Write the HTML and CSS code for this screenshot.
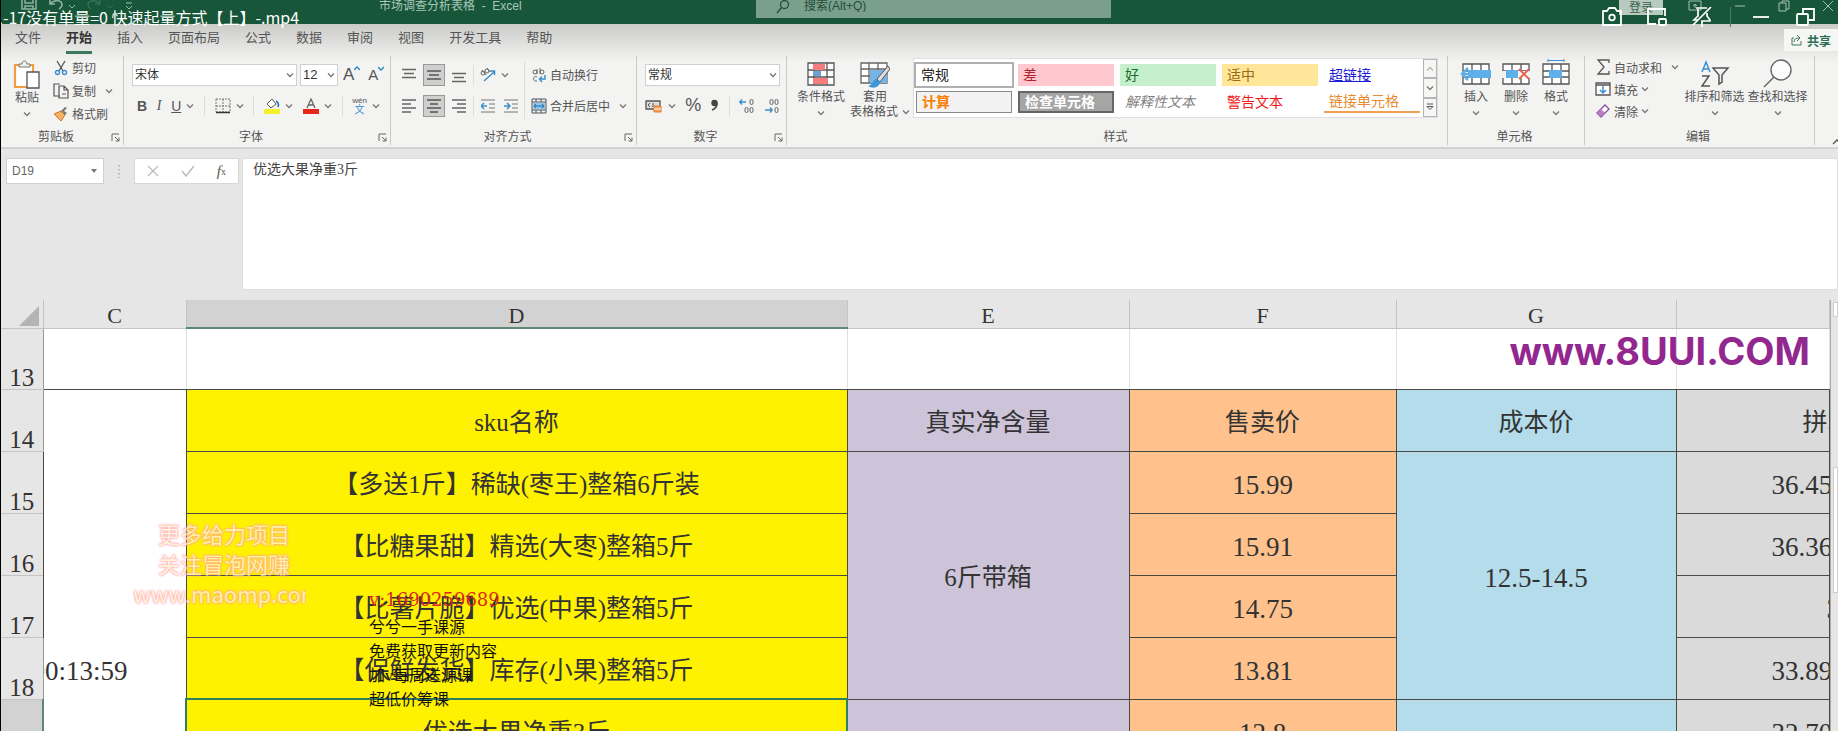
FILE: index.html
```html
<!DOCTYPE html>
<html lang="zh-CN">
<head>
<meta charset="UTF-8">
<meta name="viewport" content="width=device-width, initial-scale=1.0">
<title>市场调查分析表格 - Excel</title>
<link rel="stylesheet" href="styles.css">
</head>
<body>
<svg class="defs" aria-hidden="true">
  <symbol id="down" viewBox="0 0 8 8"><path d="M1 2.5l3 3 3-3" fill="none" stroke="#777" stroke-width="1.3"/></symbol>
  <symbol id="launch" viewBox="0 0 9 9"><path d="M1 8V1h7M4 4l4 4M8 4.500V8H4.500" fill="none" stroke="#666"/></symbol>
  <symbol id="grid" viewBox="0 0 28 24"><path d="M1 2h26v20H1zM1 9h26M1 15h26M10 2v20M19 2v20" fill="#fff" stroke="#555" stroke-width="1.3"/></symbol>
</svg>

<header class="titlebar">
  <div class="quick">
    <button aria-label="保存"><svg width="16" height="10" viewBox="0 0 16 10"><path d="M1 0v9h14V0M4 0v3h8V0M4 9V6h8v3" fill="none" stroke="#8fb3a2" stroke-width="1.500"/></svg></button>
    <button aria-label="撤消"><svg width="26" height="10" viewBox="0 0 26 10"><path d="M1 0v4h5M1 4C5-1 13 0 13 5c0 2-2 3-3 4" fill="none" stroke="#8fb3a2" stroke-width="1.600"/><path d="M20 5l3 3 3-3" fill="none" stroke="#8fb3a2"/></svg></button>
    <button aria-label="恢复"><svg width="26" height="10" viewBox="0 0 26 10"><path d="M13 0v4H8M13 4C9-1 1 0 1 5c0 2 2 3 3 4" fill="none" stroke="#31705a" stroke-width="1.500"/><path d="M20 5l3 3 3-3" fill="none" stroke="#31705a"/></svg></button>
    <button aria-label="自定义"><svg width="8" height="10" viewBox="0 0 8 10"><path d="M1 3h6M1 6l3 3 3-3" fill="none" stroke="#9dbfae"/></svg></button>
  </div>
  <div class="doc-title">市场调查分析表格 &nbsp;- &nbsp;Excel</div>
  <div class="search">
    <svg width="14" height="14" viewBox="0 0 14 14"><circle cx="8.500" cy="4.500" r="4" fill="none" stroke="#244d3b" stroke-width="1.300"/><path d="M5.500 7.500L1 13" stroke="#244d3b" stroke-width="1.400"/></svg>
    <input type="text" aria-label="搜索" placeholder="搜索(Alt+Q)">
  </div>
  <button class="login">登录</button>
  <div class="win">
    <svg width="14" height="12" viewBox="0 0 14 12"><path d="M1 1h12v9H1zM7 8V4M5 6l2-2 2 2" fill="none" stroke="#a5c2b4"/></svg>
    <svg width="12" height="12" viewBox="0 0 12 12"><path d="M1 6h10" stroke="#a5c2b4"/></svg>
    <svg width="12" height="12" viewBox="0 0 12 12"><path d="M1 3h7v8H1zM4 3V1h7v8H8" fill="none" stroke="#a5c2b4"/></svg>
    <svg width="12" height="12" viewBox="0 0 12 12"><path d="M1 1l10 10M11 1L1 11" stroke="#a5c2b4"/></svg>
  </div>
</header>

<div class="ribbon">
  <nav class="tabs">
    <a href="#">文件</a><a href="#" class="active">开始</a><a href="#">插入</a><a href="#">页面布局</a><a href="#">公式</a><a href="#">数据</a><a href="#">审阅</a><a href="#">视图</a><a href="#">开发工具</a><a href="#">帮助</a>
    <button class="share"><svg width="12" height="12" viewBox="0 0 12 12"><path d="M3 4H1v7h9V7M3 8c0-3 2-4 5-4M6 1l3 3-3 3" fill="none" stroke="#3c7a60"/></svg>共享</button>
  </nav>

  <div class="groups">
    <!-- 剪贴板 -->
    <section class="group clipboard">
      <div class="body">
        <button class="big">
          <svg width="28" height="30" viewBox="0 0 28 30"><path d="M2 5h18v22H2z" fill="#fff" stroke="#f0a040" stroke-width="2.200"/><path d="M6 7V4h3c0-4 5-4 5 0h3v3z" fill="#eee" stroke="#777"/><path d="M14 12h12v16H14z" fill="#fff" stroke="#555" stroke-width="1.300"/></svg>
          <span>粘贴</span><svg class="dn"><use href="#down"/></svg>
        </button>
        <div class="stack">
          <button><svg width="16" height="16" viewBox="0 0 16 16"><path d="M4 1l6 10M12 1L6 11" stroke="#555" stroke-width="1.300"/><circle cx="4.500" cy="12.500" r="2" fill="none" stroke="#3c8fd0" stroke-width="1.400"/><circle cx="11.500" cy="12.500" r="2" fill="none" stroke="#3c8fd0" stroke-width="1.400"/></svg>剪切</button>
          <button><svg width="16" height="16" viewBox="0 0 16 16"><path d="M7 13H1V1h6M6 3h5l4 4v8H6zM11 3v4h4M9 11h4" fill="none" stroke="#555" stroke-width="1.200"/></svg>复制<svg class="dn gap"><use href="#down"/></svg></button>
          <button><svg width="16" height="16" viewBox="0 0 16 16"><path d="M1 8l7-3 4 4-4 6z" fill="#f3b266" stroke="#c9782c"/><path d="M8 4l4 5 2-2-3-2 3-3-2-1-3 3z" fill="#777"/></svg>格式刷</button>
        </div>
      </div>
      <footer><span>剪贴板</span><svg><use href="#launch"/></svg></footer>
    </section>

    <!-- 字体 -->
    <section class="group font">
      <div class="body col">
        <div class="line">
          <div class="combo face"><select aria-label="字体"><option>宋体</option></select><svg class="dn"><use href="#down"/></svg></div>
          <div class="combo size"><select aria-label="字号"><option>12</option></select><svg class="dn"><use href="#down"/></svg></div>
          <button aria-label="增大字号" class="grow">A<svg width="6" height="5" viewBox="0 0 6 5"><path d="M0 4l3-3 3 3" fill="none" stroke="#2f87b8" stroke-width="1.300"/></svg></button>
          <button aria-label="减小字号" class="grow small">A<svg width="6" height="5" viewBox="0 0 6 5"><path d="M0 1l3 3 3-3" fill="none" stroke="#2f87b8" stroke-width="1.300"/></svg></button>
        </div>
        <div class="line marks">
          <button class="b">B</button><button class="i">I</button><button class="u">U<svg class="dn"><use href="#down"/></svg></button>
          <i class="bar"></i>
          <button aria-label="边框"><svg width="16" height="16" viewBox="0 0 16 16"><path d="M1 1h14v13H1M8 1v13M1 8h14M1 1v13" fill="none" stroke="#777" stroke-dasharray="2 1"/><path d="M1 14.500h14" stroke="#333" stroke-width="1.500"/></svg><svg class="dn"><use href="#down"/></svg></button>
          <i class="bar"></i>
          <button aria-label="填充颜色"><svg width="16" height="16" viewBox="0 0 16 16"><path d="M3 6l5-5 4 5-5 4z" fill="#fff" stroke="#555"/><path d="M12 3c2 1 3 3 2 6" fill="none" stroke="#2f6fa8" stroke-width="1.600"/><path d="M0 11h16v5H0z" fill="#f5f02a"/></svg><svg class="dn"><use href="#down"/></svg></button>
          <button aria-label="字体颜色"><svg width="16" height="16" viewBox="0 0 16 16"><path d="M4 10l4-9 4 9M5.500 7h5" fill="none" stroke="#666" stroke-width="1.300"/><path d="M0 11h16v5H0z" fill="#e8251a"/></svg><svg class="dn"><use href="#down"/></svg></button>
          <i class="bar"></i>
          <button aria-label="拼音"><span class="pinyin"><b>wén</b><em>文</em></span><svg class="dn"><use href="#down"/></svg></button>
        </div>
      </div>
      <footer><span>字体</span><svg><use href="#launch"/></svg></footer>
    </section>

    <!-- 对齐方式 -->
    <section class="group align">
      <div class="body">
        <div class="pad">
          <div class="line">
            <button aria-label="顶端对齐"><svg width="14" height="16" viewBox="0 0 14 16"><path d="M0 2.500h14M2 6.500h10M0 10.500h14" stroke="#666" stroke-width="1.300"/></svg></button>
            <button aria-label="垂直居中" class="on"><svg width="14" height="16" viewBox="0 0 14 16"><path d="M0 4h14M2 8h10M0 12h14" stroke="#555" stroke-width="1.300"/></svg></button>
            <button aria-label="底端对齐"><svg width="14" height="16" viewBox="0 0 14 16"><path d="M0 6.500h14M2 10.500h10M0 14.500h14" stroke="#666" stroke-width="1.300"/></svg></button>
            <i class="bar"></i>
            <button aria-label="方向" class="dir"><svg width="18" height="16" viewBox="0 0 18 16"><path d="M5 14L15 5M11 4h4.500v4" fill="none" stroke="#3c8fd0" stroke-width="1.500"/><circle cx="4" cy="6" r="2" fill="none" stroke="#666"/><path d="M3 3l4 5M8 1l3 4" stroke="#666"/><circle cx="8" cy="4" r="2" fill="none" stroke="#666"/></svg><svg class="dn"><use href="#down"/></svg></button>
          </div>
          <div class="line">
            <button aria-label="左对齐"><svg width="14" height="16" viewBox="0 0 14 16"><path d="M0 2h14M0 6h9M0 10h14M0 14h9" stroke="#666" stroke-width="1.300"/></svg></button>
            <button aria-label="居中" class="on"><svg width="14" height="16" viewBox="0 0 14 16"><path d="M0 2h14M3 6h8M0 10h14M3 14h8" stroke="#555" stroke-width="1.300"/></svg></button>
            <button aria-label="右对齐"><svg width="14" height="16" viewBox="0 0 14 16"><path d="M0 2h14M5 6h9M0 10h14M5 14h9" stroke="#666" stroke-width="1.300"/></svg></button>
            <i class="bar"></i>
            <button aria-label="减少缩进"><svg width="14" height="16" viewBox="0 0 14 16"><path d="M0 2h14M8 6h6M8 10h6M0 14h14" stroke="#777"/><path d="M6 8H1M3 5L0 8l3 3" fill="none" stroke="#3c8fd0" stroke-width="1.500"/></svg></button>
            <button aria-label="增加缩进"><svg width="14" height="16" viewBox="0 0 14 16"><path d="M0 2h14M8 6h6M8 10h6M0 14h14" stroke="#777"/><path d="M0 8h5M3 5l3 3-3 3" fill="none" stroke="#3c8fd0" stroke-width="1.500"/></svg></button>
          </div>
        </div>
        <i class="bar tall"></i>
        <div class="pad merge">
          <button class="line"><svg width="16" height="16" viewBox="0 0 16 16"><circle cx="4" cy="5" r="2" fill="none" stroke="#666"/><path d="M6 2v5M9 1v6" stroke="#666"/><circle cx="11" cy="5" r="2" fill="none" stroke="#666"/><path d="M6 10c-4-2-5 5 0 4" fill="none" stroke="#666"/><path d="M14 8v4H9M11 9.500L8.500 12l2.500 3" fill="none" stroke="#3c8fd0" stroke-width="1.500"/></svg>自动换行</button>
          <button class="line"><svg width="16" height="16" viewBox="0 0 16 16"><path d="M1 1h14v14H1zM1 4h14M1 12h14M5 1v3M10 1v3M5 12v3M10 12v3" fill="#e8f3fb" stroke="#555"/><path d="M2 5h12v6H2z" fill="#8cc4ec"/><path d="M3 8h10M5 6L3 8l2 2M11 6l2 2-2 2" fill="none" stroke="#1f6fae"/></svg>合并后居中<svg class="dn gap"><use href="#down"/></svg></button>
        </div>
      </div>
      <footer><span>对齐方式</span><svg><use href="#launch"/></svg></footer>
    </section>

    <!-- 数字 -->
    <section class="group number">
      <div class="body col">
        <div class="line">
          <div class="combo fmt"><select aria-label="数字格式"><option>常规</option></select><svg class="dn"><use href="#down"/></svg></div>
        </div>
        <div class="line">
          <button aria-label="会计数字格式" class="money"><svg width="17" height="16" viewBox="0 0 17 16"><path d="M1 3h14v8H1z" fill="#ddd" stroke="#555" stroke-width="1.300"/><path d="M5 5l-2 2 2 2M8 5v4" fill="none" stroke="#555"/><path d="M9 8h7v6H9z" fill="#f6a05a" stroke="#e07a28"/><path d="M9 11h7" stroke="#fff"/></svg><svg class="dn"><use href="#down"/></svg></button>
          <button class="pct">%</button>
          <button aria-label="千位分隔"><svg width="9" height="14" viewBox="0 0 9 14"><circle cx="4.500" cy="4" r="3.200" fill="#444"/><path d="M7 4c0 4-2 6-5 7" fill="none" stroke="#444" stroke-width="1.600"/></svg></button>
          <i class="bar"></i>
          <button aria-label="增加小数"><svg width="16" height="16" viewBox="0 0 16 16"><path d="M7 4H1M3 1.500L.800 4 3 6.500" fill="none" stroke="#3c8fd0" stroke-width="1.400"/><g fill="none" stroke="#666"><rect x="11" y="1.500" width="3" height="5" rx="1.500"/><rect x="6" y="9.500" width="3" height="5" rx="1.500"/><rect x="11" y="9.500" width="3" height="5" rx="1.500"/></g></svg></button>
          <button aria-label="减少小数"><svg width="16" height="16" viewBox="0 0 16 16"><path d="M1 12h7M6 9.500L8.200 12 6 14.500" fill="none" stroke="#3c8fd0" stroke-width="1.400"/><g fill="none" stroke="#666"><rect x="6" y="1.500" width="3" height="5" rx="1.500"/><rect x="11" y="1.500" width="3" height="5" rx="1.500"/><rect x="11" y="9.500" width="3" height="5" rx="1.500"/></g></svg></button>
        </div>
      </div>
      <footer><span>数字</span><svg><use href="#launch"/></svg></footer>
    </section>

    <!-- 样式 -->
    <section class="group style">
      <div class="body">
        <button class="big">
          <svg width="28" height="30" viewBox="0 0 28 30"><path d="M1 4h26v22H1zM1 11h26M1 18h26M7 4v22M20 4v22" fill="#fff" stroke="#555" stroke-width="1.300"/><path d="M6 5h12v6H6zM6 19h15v6H6z" fill="#f47c7c"/><path d="M6 12h8v5H6z" fill="#6f9fd0"/></svg>
          <span>条件格式</span><svg class="dn"><use href="#down"/></svg>
        </button>
        <button class="big">
          <svg width="30" height="30" viewBox="0 0 30 30"><path d="M1 4h26v20H1zM1 10h26M1 17h26M9 4v20M18 4v20" fill="#fff" stroke="#666" stroke-width="1.300"/><path d="M10 11h17v13H10z" fill="#74b4e6"/><path d="M28 7L17 20l3 3L30 10z" fill="#ddd" stroke="#555"/><path d="M17 20c-4 0-4 6-9 7 5 3 11 2 12-4z" fill="#3a96d8"/></svg>
          <span>套用</span><span class="two">表格格式<svg class="dn"><use href="#down"/></svg></span>
        </button>
        <div class="gallery">
          <div class="cells">
            <button class="normal">常规</button><button class="bad">差</button><button class="good">好</button><button class="neutral">适中</button><button class="hyper">超链接</button>
            <button class="calc">计算</button><button class="check">检查单元格</button><button class="explain">解释性文本</button><button class="warn">警告文本</button><button class="linked">链接单元格</button>
          </div>
          <div class="scroller">
            <button aria-label="上一行"><svg class="dn up"><use href="#down"/></svg></button>
            <button aria-label="下一行"><svg class="dn"><use href="#down"/></svg></button>
            <button aria-label="其他"><svg width="8" height="8" viewBox="0 0 8 8"><path d="M1 1h6M1 3.500h6L4 6.500z" fill="none" stroke="#555"/></svg></button>
          </div>
        </div>
      </div>
      <footer><span>样式</span></footer>
    </section>

    <!-- 单元格 -->
    <section class="group cellgrp">
      <div class="body">
        <button class="big"><svg width="32" height="30" viewBox="0 0 32 30"><use href="#grid" x="2" y="3" width="28" height="24"/><path d="M8 11h23v8H8z" fill="#5fb0ea"/><path d="M16 15H2M8 9l-6 6 6 6" fill="none" stroke="#5fb0ea" stroke-width="2.500"/></svg><span>插入</span><svg class="dn"><use href="#down"/></svg></button>
        <button class="big"><svg width="30" height="30" viewBox="0 0 30 30"><use href="#grid" x="1" y="3" width="28" height="24"/><path d="M0 12h30v7H0z" fill="#f3f3f2"/><path d="M5 11h12v8H5z" fill="#5fb0ea"/><path d="M18 10l10 10M28 10L18 20" stroke="#e8604c" stroke-width="1.800"/></svg><span>删除</span><svg class="dn"><use href="#down"/></svg></button>
        <button class="big"><svg width="30" height="30" viewBox="0 0 30 30"><use href="#grid" x="1" y="3" width="28" height="24"/><path d="M8 11h13v8H8z" fill="#5fb0ea"/><path d="M7 1.500h16M7 0v3M23 0v3" stroke="#3c8fd0"/></svg><span>格式</span><svg class="dn"><use href="#down"/></svg></button>
      </div>
      <footer><span>单元格</span></footer>
    </section>

    <!-- 编辑 -->
    <section class="group edit">
      <div class="body">
        <div class="stack">
          <button><svg width="16" height="16" viewBox="0 0 16 16"><path d="M14 4V1H3l6 7-6 7h11v-3" fill="none" stroke="#555" stroke-width="1.300"/></svg>自动求和<svg class="dn gap"><use href="#down"/></svg></button>
          <button><svg width="16" height="16" viewBox="0 0 16 16"><path d="M1 2h14v12H1zM1 4h14" fill="#fff" stroke="#555" stroke-width="1.300"/><path d="M8 5v7M5 9l3 3 3-3" fill="none" stroke="#3c8fd0" stroke-width="1.500"/></svg>填充<svg class="dn"><use href="#down"/></svg></button>
          <button><svg width="16" height="16" viewBox="0 0 16 16"><path d="M2 10l8-8 4 4-8 8z" fill="#fff" stroke="#8a4f9e" stroke-width="1.300"/><path d="M2 10l4-4 4 4-4 4z" fill="#b87cc8"/></svg>清除<svg class="dn"><use href="#down"/></svg></button>
        </div>
        <button class="big"><svg width="30" height="30" viewBox="0 0 30 30"><path d="M2 13L6 3l4 10M3.500 10h5" fill="none" stroke="#3c8fd0" stroke-width="1.500"/><path d="M2 17h7L2 27h8M13 9h15l-6 7v7l-3 2v-9z" fill="none" stroke="#555" stroke-width="1.500"/></svg><span>排序和筛选</span><svg class="dn"><use href="#down"/></svg></button>
        <button class="big"><svg width="30" height="30" viewBox="0 0 30 30"><circle cx="18" cy="11" r="10" fill="#fcfcfc" stroke="#666" stroke-width="1.400"/><path d="M11 18L1 28" stroke="#666" stroke-width="1.500"/></svg><span>查找和选择</span><svg class="dn"><use href="#down"/></svg></button>
      </div>
      <footer><span>编辑</span></footer>
    </section>
    <button class="fold" aria-label="折叠功能区"><svg width="6" height="8" viewBox="0 0 6 8"><path d="M1 6l4-4 4 4" fill="none" stroke="#555" stroke-width="1.300"/></svg></button>
  </div>
</div>

<div class="formula">
  <div class="namebox combo"><select aria-label="名称框"><option>D19</option></select><svg width="8" height="6" viewBox="0 0 8 6"><path d="M1 1h6L4 5z" fill="#777"/></svg></div>
  <svg class="dots" width="4" height="14" viewBox="0 0 4 14"><path d="M2 1v13" stroke="#aaa" stroke-width="1.500" stroke-dasharray="1.500 2.500"/></svg>
  <div class="fx">
    <svg width="12" height="12" viewBox="0 0 12 12"><path d="M1 1l10 10M11 1L1 11" stroke="#bbb" stroke-width="1.300"/></svg>
    <svg width="14" height="12" viewBox="0 0 14 12"><path d="M1 6l4 5 8-10" fill="none" stroke="#bbb" stroke-width="1.400"/></svg>
    <button><i>f</i><small>x</small></button>
  </div>
  <textarea aria-label="编辑栏">优选大果净重3斤</textarea>
</div>

<main class="sheet">
  <div class="view">
    <table>
      <colgroup><col class="c-row"><col class="c-c"><col class="c-d"><col class="c-e"><col class="c-f"><col class="c-g"><col></colgroup>
      <thead>
        <tr><th class="corner"><svg width="20" height="20" viewBox="0 0 20 20"><path d="M20 0v20H0z" fill="#b4b4b4"/></svg></th><th>C</th><th class="sel">D</th><th>E</th><th>F</th><th>G</th><th></th></tr>
      </thead>
      <tbody>
        <tr class="blank"><th>13</th><td></td><td></td><td></td><td></td><td></td><td></td></tr>
        <tr><th>14</th><td class="plain" rowspan="4"></td><td class="yellow">sku名称</td><td class="purple">真实净含量</td><td class="orange">售卖价</td><td class="blue">成本价</td><td class="gray head">拼单价</td></tr>
        <tr><th>15</th><td class="yellow">【多送1斤】稀缺(枣王)整箱6斤装</td><td class="purple" rowspan="4">6斤带箱</td><td class="orange num">15.99</td><td class="blue num" rowspan="4">12.5-14.5</td><td class="gray num">36.45</td></tr>
        <tr><th>16</th><td class="yellow">【比糖果甜】精选(大枣)整箱5斤</td><td class="orange num">15.91</td><td class="gray num">36.36</td></tr>
        <tr><th>17</th><td class="yellow">【比薯片脆】优选(中果)整箱5斤</td><td class="orange num">14.75</td><td class="gray num edge">35</td></tr>
        <tr><th>18</th><td class="plain time num"><div>00:13:59</div></td><td class="yellow">【保鲜发货】库存(小果)整箱5斤</td><td class="orange num">13.81</td><td class="gray num">33.89</td></tr>
        <tr><th class="sel"></th><td class="plain"></td><td class="yellow current">优选大果净重3斤</td><td class="purple"></td><td class="orange num">12.8</td><td class="blue"></td><td class="gray num">32.70</td></tr>
      </tbody>
    </table>
  </div>
  <div class="vscroll"><i class="knob"></i><i class="thumb"></i></div>
</main>

<!-- 播放器浮层 -->
<div class="video-name">1-17没有单量=0 快速起量方式【上】-.mp4</div>
<div class="player">
  <button aria-label="截图"><svg width="22" height="20" viewBox="0 0 22 20"><path d="M2 4h4l2-3h6l2 3h4v14H2z" fill="none" stroke="#fff" stroke-width="1.800" stroke-linejoin="round"/><circle cx="11" cy="10.500" r="2.800" fill="none" stroke="#fff" stroke-width="1.800"/></svg></button>
  <button aria-label="小窗"><svg width="22" height="20" viewBox="0 0 22 20"><path d="M10 17H2V2h17v7" fill="none" stroke="#fff" stroke-width="1.800"/><rect x="13" y="12" width="7" height="6" rx="1" fill="none" stroke="#fff" stroke-width="1.800"/></svg></button>
  <button aria-label="置顶"><svg width="22" height="20" viewBox="0 0 22 20"><path d="M2 18L20 0M5 1h11M7 2v7l-4 4h4M16 6v3l3 4v1h-8v6" fill="none" stroke="#fff" stroke-width="1.700"/></svg></button>
  <i class="split"></i>
  <button aria-label="最小化"><svg width="22" height="20" viewBox="0 0 22 20"><path d="M3 10h16" stroke="#fff" stroke-width="1.800"/></svg></button>
  <button aria-label="还原"><svg width="22" height="20" viewBox="0 0 22 20"><rect x="2" y="7" width="11" height="11" rx="1" fill="none" stroke="#fff" stroke-width="1.800"/><path d="M8 6V2h11v11h-5" fill="none" stroke="#fff" stroke-width="1.800"/></svg></button>
</div>
<div class="mark-site">www.8UUI.COM</div>
<div class="mark-pink"><p>更多给力项目</p><p>关注冒泡网赚</p><p class="url">www.maomp.com</p></div>
<div class="mark-course"><p class="red">v:1690259689</p><p>兮兮一手课源</p><p>免费获取更新内容</p><p>加v每周送源课</p><p>超低价筹课</p></div>
</body>
</html>
```
FILE: styles.css
```css
* {
  box-sizing: border-box;
}

body {
  margin: 0;
  height: 100vh;
  display: flex;
  flex-direction: column;
  position: relative;
  overflow: hidden;
  border-left: 1px solid #000;
  background: #e6e6e6;
  color: #555;
  font-family: "Liberation Sans", "Noto Sans CJK SC", sans-serif;
  font-size: 12px;
}

button {
  display: flex;
  align-items: center;
  padding: 0;
  border: 0;
  background: none;
  color: inherit;
  font: inherit;
  white-space: nowrap;
}

svg {
  flex: none;
}

p {
  margin: 0;
}

.defs {
  display: none;
}

.dn {
  width: 8px;
  height: 8px;
}

/* title bar */
.titlebar {
  display: flex;
  align-items: flex-start;
  flex: none;
  height: 24px;
  background: #18563a;
  overflow: hidden;
}

.quick {
  display: flex;
  gap: 12px;
  width: 378px;
  padding-left: 20px;
}

.doc-title {
  width: 377px;
  line-height: 12px;
  color: #a9c7b8;
  white-space: pre;
}

.search {
  display: flex;
  gap: 14px;
  width: 355px;
  height: 18px;
  padding-left: 20px;
  background: #7a9f8d;
}

.search input {
  height: 12px;
  padding: 0;
  border: 0;
  background: none;
  font: inherit;
}

.search input::placeholder {
  color: #244d3b;
}

.login {
  height: 15px;
  margin-left: auto;
  padding: 0 10px 2px;
  background: #b9cbc1;
  color: #39614e;
}

.win {
  display: flex;
  gap: 32px;
  padding: 0 4px 0 25px;
}

/* ribbon */
.ribbon {
  flex: none;
  border-bottom: 2px solid #d2d2d1;
  background: linear-gradient(#cbcbca, #f3f3f2 38px);
}

.tabs {
  display: flex;
  align-items: center;
  gap: 25px;
  height: 32px;
  padding-left: 14px;
  font-size: 13px;
}

.tabs a {
  height: 28px;
  line-height: 24px;
  color: #555;
  text-decoration: none;
}

.tabs .active {
  border-bottom: 3px solid #3c7a60;
  color: #333;
  font-weight: bold;
}

.share {
  gap: 4px;
  height: 22px;
  margin-left: auto;
  padding: 0 7px;
  background: #f6f6f5;
  color: #2c6e52;
  font-weight: bold;
  font-size: 12px;
}

.groups {
  display: flex;
  height: 91px;
}

.group {
  display: flex;
  flex-direction: column;
  flex: none;
  margin-bottom: 2px;
  border-right: 1px solid #c9c9c8;
}

.clipboard { width: 123px; }
.font { width: 267px; }
.align { width: 246px; }
.number { width: 150px; }
.style { flex: 1; }
.cellgrp { width: 137px; }
.edit { width: 230px; }

.body {
  display: flex;
  flex: 1;
}

.group footer {
  display: flex;
  align-items: center;
  height: 16px;
  padding-right: 3px;
  line-height: 16px;
}

.group footer span {
  flex: 1;
  text-align: center;
}

.group footer svg {
  width: 9px;
  height: 9px;
}

.big {
  flex-direction: column;
  justify-content: flex-start;
  padding-top: 3px;
  line-height: 16px;
}

.big .dn {
  margin-top: 4px;
}

.big .two {
  line-height: 14px;
  margin-right: -10px;
}

.big .two .dn {
  margin: 0 0 0 4px;
}

.clipboard .big {
  width: 52px;
  padding-top: 4px;
}

.stack {
  display: flex;
  flex-direction: column;
}

.stack button {
  gap: 3px;
  height: 23px;
}

.dn.gap {
  margin-left: 6px;
}

.col,
.pad {
  padding-top: 7px;
}

.col {
  flex-direction: column;
}

.line {
  display: flex;
  align-items: center;
  height: 23px;
  margin-bottom: 8px;
}

.combo {
  display: grid;
  align-items: center;
  height: 22px;
  border: 1px solid #d0d0d0;
  background: #fff;
}

.combo select {
  grid-area: 1 / 1;
  width: 100%;
  height: 20px;
  padding: 0 2px;
  border: 0;
  appearance: none;
  background: none;
  color: #333;
  font: inherit;
}

.combo svg {
  grid-area: 1 / 1;
  justify-self: end;
  margin-right: 2px;
  pointer-events: none;
}

.font .body {
  padding-left: 8px;
}

.face { width: 165px; margin-right: 3px; }
.size { width: 38px; margin-right: 5px; font-size: 13px; }
.fmt { width: 135px; }

.grow {
  align-items: flex-start;
  margin-right: 8px;
  font-size: 17px;
  line-height: 18px;
}

.grow.small {
  margin-right: 0;
  font-size: 15px;
}

.bar {
  width: 1px;
  height: 20px;
  background: #dcdcdb;
}

.marks {
  justify-content: space-between;
  padding: 0 10px 0 5px;
  font-size: 14px;
}

.marks button {
  gap: 5px;
}

.b { font-weight: bold; }
.i { font-family: "Liberation Serif", serif; font-style: italic; }
.u { text-decoration: underline; }

.pinyin {
  display: flex;
  flex-direction: column;
  align-items: center;
  line-height: 8px;
}

.pinyin b { font-size: 8px; font-weight: normal; }
.pinyin em { color: #3c8fd0; font-size: 10px; font-style: normal; line-height: 10px; }

.align .line {
  gap: 5px;
}

.align .pad {
  width: 133px;
  padding-left: 9px;
}

.align .pad button {
  justify-content: center;
  width: 18px;
  height: 22px;
}

.align .pad .on {
  width: 22px;
  border: 1px solid #999;
  background: #cfcfce;
}

.align .pad .dir {
  justify-content: flex-start;
  gap: 4px;
  width: 40px;
}

.bar.tall {
  height: 58px;
  margin-top: 5px;
}

.align .merge {
  width: auto;
  padding-left: 6px;
}

.align .merge button {
  justify-content: flex-start;
  width: auto;
  height: 23px;
  gap: 3px;
}

.number .body {
  padding-left: 8px;
}

.number .line {
  justify-content: space-between;
  padding-right: 6px;
}

.money {
  gap: 6px;
}

.pct {
  font-size: 18px;
}

/* cell style gallery */
.style .body {
  padding-left: 10px;
  gap: 6px;
}

.style .big {
  width: 48px;
}

.style .gallery {
  display: flex;
  flex: 1;
  height: 60px;
  margin: 2px 9px 0 8px;
  border: 1px solid #dedede;
  background: #fff;
}

.cells {
  display: grid;
  flex: 1;
  grid-template-columns: repeat(5, 1fr);
  grid-auto-rows: 22px;
  gap: 5px 6px;
  padding: 5px 3px 0 2px;
  font-size: 14px;
}

.cells button {
  padding: 0 5px 2px;
}

.cells .normal { outline: 2px solid #b0b0b0; color: #222; }
.cells .bad { background: #ffc7ce; color: #b3262e; }
.cells .good { background: #c6efce; color: #1d6b2c; }
.cells .neutral { background: #ffe699; color: #9c6a10; }
.cells .hyper { color: #1c1cd8; text-decoration: underline; }
.cells .calc { border: 1px solid #8a8a8a; background: #f2f2f2; color: #fa7d00; font-weight: bold; }
.cells .check { border: 2px solid #666; background: #a5a5a5; color: #fff; font-weight: bold; }
.cells .explain { color: #7f7f7f; font-style: italic; }
.cells .warn { color: #f01818; }
.cells .linked { border-bottom: 2px solid #f0a050; color: #e88a30; }

.scroller {
  display: grid;
  grid-template-rows: 1fr 1fr 1fr;
  width: 14px;
}

.scroller button {
  justify-content: center;
  border: 1px solid #b5b5b5;
  background: #f6f6f5;
}

.up {
  transform: rotate(180deg);
  opacity: .5;
}

.cellgrp .body {
  padding-left: 8px;
}

.cellgrp .big {
  width: 40px;
}

.edit .body {
  padding-left: 10px;
}

.edit .stack {
  width: 88px;
}

.edit .stack button {
  height: 22px;
}

.edit .big {
  width: 63px;
}

.fold {
  align-items: flex-end;
  justify-content: flex-end;
  width: 23px;
  padding-bottom: 1px;
}

/* formula bar */
.formula {
  display: flex;
  align-items: flex-start;
  flex: none;
  height: 151px;
  padding-top: 9px;
}

.namebox {
  width: 98px;
  height: 26px;
  margin-left: 5px;
}

.namebox select {
  padding-left: 5px;
  color: #666;
}

.namebox svg {
  margin-right: 5px;
}

.dots {
  margin: 6px 13px 0;
}

.fx {
  display: flex;
  align-items: center;
  justify-content: space-between;
  width: 105px;
  height: 26px;
  padding: 0 12px;
  border: 1px solid #d8d8d8;
  background: #fff;
}

.fx button {
  font-family: "Liberation Serif", serif;
  font-size: 15px;
}

.fx small {
  font-size: 10px;
}

.formula textarea {
  flex: 1;
  height: 132px;
  margin-left: 3px;
  padding: 2px 10px;
  border: 1px solid #dedede;
  resize: none;
  color: #444;
  font: 14px/18px "Liberation Serif", "Noto Sans CJK SC", serif;
}

/* sheet */
.sheet {
  display: flex;
  flex: 1;
  min-height: 0;
  overflow: hidden;
}

.view {
  flex: 1;
  min-width: 0;
  overflow: hidden;
  border-right: 1px solid #aaa;
}

table {
  width: 100%;
  border-collapse: collapse;
  table-layout: fixed;
  color: #333;
  font: 25px/30px "Liberation Serif", "Noto Sans CJK SC", serif;
}

.c-row { width: 42px; }
.c-c { width: 143px; }
.c-d { width: 661px; }
.c-e { width: 282px; }
.c-f { width: 267px; }
.c-g { width: 280px; }

th,
td {
  padding: 0;
  overflow: hidden;
  font-weight: normal;
  text-align: center;
  white-space: nowrap;
}

td {
  padding-top: 6px;
}

thead th {
  height: 28px;
  padding-top: 4px;
  border-right: 1px solid #c4c4c4;
  border-bottom: 1px solid #c4c4c4;
  font-size: 22px;
  line-height: 22px;
}

thead .sel {
  border-bottom: 2px solid #5f8878;
  background: #d2d2d2;
}

.corner svg {
  display: block;
  margin-left: 18px;
}

tbody tr {
  height: 62px;
}

tbody .blank {
  height: 61px;
}

tbody th {
  border-right: 1px solid #999;
  border-bottom: 1px solid #c4c4c4;
  line-height: 22px;
  vertical-align: bottom;
}

tbody th.sel {
  border-right: 2px solid #5f8878;
  background: #d2d2d2;
}

td {
  border: 1px solid #4a4a44;
}

.blank td {
  border-color: #e0e0e0;
  border-bottom-color: #4a4a44;
  background: #fff;
}

.plain {
  border-top: 0;
  border-bottom: 0;
  background: #fff;
}

.yellow { background: #fff200; }
.purple { background: #cdc4da; }
.orange { background: #ffc28c; }
.blue { background: #b4dcea; }
.gray { background: #dadada; padding-left: 95px; text-align: left; }
.gray.head { padding-left: 126px; }
.gray.edge { padding-left: 150px; }

.num {
  font-size: 27px;
}

.time div {
  display: flex;
  justify-content: flex-end;
  padding-right: 58px;
}

.current {
  border: 2px solid #2f8060;
}

.vscroll {
  display: flex;
  flex-direction: column;
  align-items: flex-end;
  gap: 150px;
  width: 7px;
  padding-top: 2px;
}

.knob,
.thumb {
  width: 5px;
  height: 15px;
  border: 1px solid #ccc;
  background: #fff;
}

.thumb {
  height: 126px;
}

/* overlays */
.video-name {
  position: absolute;
  top: 5px;
  left: -7px;
  color: #fff;
  font: 16px/24px "Noto Sans CJK SC", sans-serif;
  white-space: nowrap;
}

.player {
  position: absolute;
  top: 7px;
  right: 21px;
  display: flex;
  align-items: center;
  gap: 23px;
}

.split {
  width: 1px;
  height: 20px;
  margin: 0 -4px 0 -6px;
  background: #4c7c66;
}

.mark-site {
  position: absolute;
  top: 329px;
  right: 28px;
  color: #92278f;
  font: bold 38px/45px Inter, sans-serif;
}

.mark-pink {
  position: absolute;
  top: 518px;
  left: 132px;
  width: 173px;
  overflow: hidden;
  color: #fff3c8;
  font: 22px/30px "Noto Sans CJK SC", sans-serif;
  text-align: right;
  text-shadow: 0 0 2px #ff8fb0, 0 0 2px #ff8fb0, 0 0 3px #ffa8c0;
  opacity: .8;
}

.mark-pink p {
  padding-right: 16px;
}

.mark-pink .url {
  padding: 0;
  text-align: left;
}

.mark-course {
  position: absolute;
  top: 588px;
  left: 368px;
  color: #111;
  font: 16px/24px "Liberation Serif", "Noto Sans CJK SC", serif;
}

.mark-course .red {
  height: 28px;
  color: #d8281c;
  font: 18px/24px "DejaVu Serif", serif;
}
```
